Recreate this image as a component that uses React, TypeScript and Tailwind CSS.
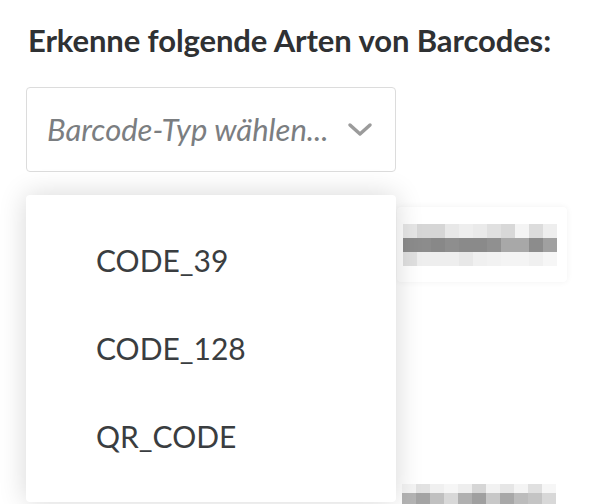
import React from 'react';

const topLight = ['#e6e6e6', '#d6d6d6', '#d6d6d6', '#e8e8e8', '#eeeeee', '#eaeaea', '#e0e0e0', '#d8d8d8', '#f4f4f4', '#dcdcdc', '#eeeeee'];
const midDark = ['#8c8c8c', '#8c8c8c', '#888888', '#8e8e8e', '#8a8a8a', '#8a8a8a', '#909090', '#a8a8a8', '#a8a8a8', '#8c8c8c', '#a0a0a0'];
const lowLight = ['#e0e0e0', '#eeeeee', '#eeeeee', '#eeeeee', '#e8e8e8', '#f0f0f0', '#f2f2f2', '#f4f4f4', '#f4f4f4', '#f0f0f0', '#f6f6f6'];
const botLight = ['#f4f4f4', '#e2e2e2', '#f0f0f0', '#f6f6f6', '#eeeeee', '#d6d6d6', '#f2f2f2', '#e6e6e6', '#f4f4f4', '#e0e0e0', '#f6f6f6'];
const botDark = ['#b4b4b4', '#a4a4a4', '#c0c0c0', '#d8d8d8', '#b0b0b0', '#a0a0a0', '#c8c8c8', '#a8a8a8', '#bcbcbc', '#c4c4c4', '#d8d8d8'];

const options = ['CODE_39', 'CODE_128', 'QR_CODE'];

const MosaicRow = ({ colors, h }: { colors: string[]; h: string }) => (
  <div className="flex">
    {colors.map((c, i) => (
      <div key={i} className={`w-[14px] ${h}`} style={{ background: c }} />
    ))}
  </div>
);

export default function App() {
  return (
    <div className="relative h-[504px] w-[604px] overflow-hidden bg-white font-['Lato','Liberation_Sans',sans-serif] text-[#2f3133]">
      <div className="pl-[28px] pt-[20px]">
        <h2 className="text-[31px] font-bold leading-[40px] tracking-[-0.1px]">Erkenne folgende Arten von Barcodes:</h2>
      </div>

      <div className="relative z-10 ml-[26px] mt-[27px] w-[370px]">
        <div className="flex h-[85px] items-center justify-between rounded-[4px] border border-[#dcdcdc] bg-white pl-[20px] pr-[22px]">
          <span className="text-[31px] italic text-[#7b7e81]">Barcode-Typ wählen...</span>
          <svg width="26" height="16" viewBox="0 0 26 16" fill="none">
            <path d="M3 3 L13 12 L23 3" stroke="#9b9b9b" strokeWidth="3.5" strokeLinecap="round" strokeLinejoin="round" />
          </svg>
        </div>

        <div className="absolute left-0 top-[108px] h-[307px] w-[370px] rounded-[4px] bg-white shadow-[0_0_28px_rgba(0,0,0,0.16)]">
          <ul className="pt-[43px]">
            {options.map((o) => (
              <li key={o} className="flex h-[88px] items-start pl-[70px] text-[30px] leading-[44px] text-[#3a3d40]">
                {o}
              </li>
            ))}
          </ul>
        </div>
      </div>

      <div className="ml-[397px] mt-[35px] flex h-[75px] w-[170px] flex-col rounded-[4px] bg-white pl-[6px] pt-[17px] shadow-[0_0_6px_rgba(0,0,0,0.06)]">
        <MosaicRow colors={topLight} h="h-[14px]" />
        <MosaicRow colors={midDark} h="h-[14px]" />
        <MosaicRow colors={lowLight} h="h-[14px]" />
      </div>

      <div className="mt-[202px] flex items-start">
        <div className="ml-[80px] w-[320px] whitespace-nowrap pt-[12px] text-[30px] leading-[40px] text-[#3a3d40]">
          Aztec
        </div>
        <div className="flex flex-col pl-[2px]">
          <MosaicRow colors={botLight} h="h-[9px]" />
          <MosaicRow colors={botDark} h="h-[14px]" />
        </div>
      </div>
    </div>
  );
}
